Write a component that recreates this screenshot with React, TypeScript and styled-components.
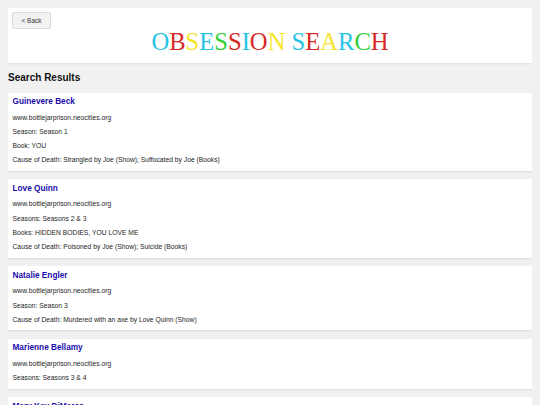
import React from 'react'
import { createGlobalStyle, styled } from 'styled-components'

type Victim = {
    name: string
    url: string
    details: string[]
}

const TITLE_COLORS: Record<string, string> = {
    c: '#27c4e4',
    r: '#d62a26',
    y: '#f7e52c',
    g: '#36cf3a',
}

// one colour code per letter, space kept as-is
const TITLE = 'OBSESSION SEARCH'
const TITLE_PATTERN = 'crycgrcry crycgr'

const victims: Victim[] = [
    {
        name: 'Guinevere Beck',
        url: 'www.bottlejarprison.neocities.org',
        details: [
            'Season: Season 1',
            'Book: YOU',
            'Cause of Death: Strangled by Joe (Show); Suffocated by Joe (Books)',
        ],
    },
    {
        name: 'Love Quinn',
        url: 'www.bottlejarprison.neocities.org',
        details: [
            'Seasons: Seasons 2 & 3',
            'Books: HIDDEN BODIES, YOU LOVE ME',
            'Cause of Death: Poisoned by Joe (Show); Suicide (Books)',
        ],
    },
    {
        name: 'Natalie Engler',
        url: 'www.bottlejarprison.neocities.org',
        details: [
            'Season: Season 3',
            'Cause of Death: Murdered with an axe by Love Quinn (Show)',
        ],
    },
    {
        name: 'Marienne Bellamy',
        url: 'www.bottlejarprison.neocities.org',
        details: ['Seasons: Seasons 3 & 4'],
    },
    {
        name: 'Mary Kay DiMarco',
        url: 'www.bottlejarprison.neocities.org',
        details: ['Season: Season 3', 'Book: YOU LOVE ME'],
    },
]

export default function App() {
    return (
        <>
            <GlobalStyle />
            <Header>
                <BackButton type="button">&lt; Back</BackButton>
                <Title>
                    {TITLE.split('').map((letter, i) =>
                        letter === ' ' ? (
                            ' '
                        ) : (
                            <Letter key={i} $color={TITLE_COLORS[TITLE_PATTERN[i]]}>
                                {letter}
                            </Letter>
                        )
                    )}
                </Title>
            </Header>
            <SectionTitle>Search Results</SectionTitle>
            <Results>
                {victims.map((victim) => (
                    <Card key={victim.name}>
                        <Name>{victim.name}</Name>
                        <Info>{victim.url}</Info>
                        {victim.details.map((line) => (
                            <Info key={line}>{line}</Info>
                        ))}
                    </Card>
                ))}
            </Results>
        </>
    )
}

const GlobalStyle = createGlobalStyle`
    body {
        margin: 8px;
        background: #f1f1f1;
        font-family: "Liberation Sans", Arial, sans-serif;
        color: #222;
    }
`

const Header = styled.header`
    background: #fff;
    padding: 4px 4px 7px;
    box-shadow: 0 1px 2px rgba(0, 0, 0, 0.08);
`

const BackButton = styled.button`
    display: block;
    width: 39px;
    height: 17px;
    padding: 0;
    border: 1px solid #dcdcdc;
    border-radius: 2px;
    background: #f2f2f2;
    color: #333;
    font-family: inherit;
    font-size: 6.5px;
    cursor: pointer;
`

const Title = styled.h1`
    margin: 0;
    text-align: center;
    font-family: "Liberation Serif", "Times New Roman", serif;
    font-size: 24.6px;
    font-weight: 400;
    line-height: 26.5px;
`

const Letter = styled.span<{ $color: string }>`
    color: ${(props) => props.$color};
`

const SectionTitle = styled.h2`
    margin: 9px 0 9px;
    font-size: 10px;
    line-height: 12px;
    font-weight: 700;
    color: #111;
`

const Results = styled.div`
    display: flex;
    flex-direction: column;
    gap: 8.5px;
`

const Card = styled.div`
    background: #fff;
    padding: 4.5px 4.5px 6.5px;
    box-shadow: 0 1px 2px rgba(0, 0, 0, 0.1);
`

const Name = styled.h3`
    margin: 0 0 7px;
    font-size: 8.25px;
    line-height: 9.5px;
    font-weight: 700;
    color: #1a0dab;
`

const Info = styled.p`
    margin: 0;
    font-size: 6.75px;
    line-height: 8px;
    color: #1e1e1e;

    & + & {
        margin-top: 6.3px;
    }
`
